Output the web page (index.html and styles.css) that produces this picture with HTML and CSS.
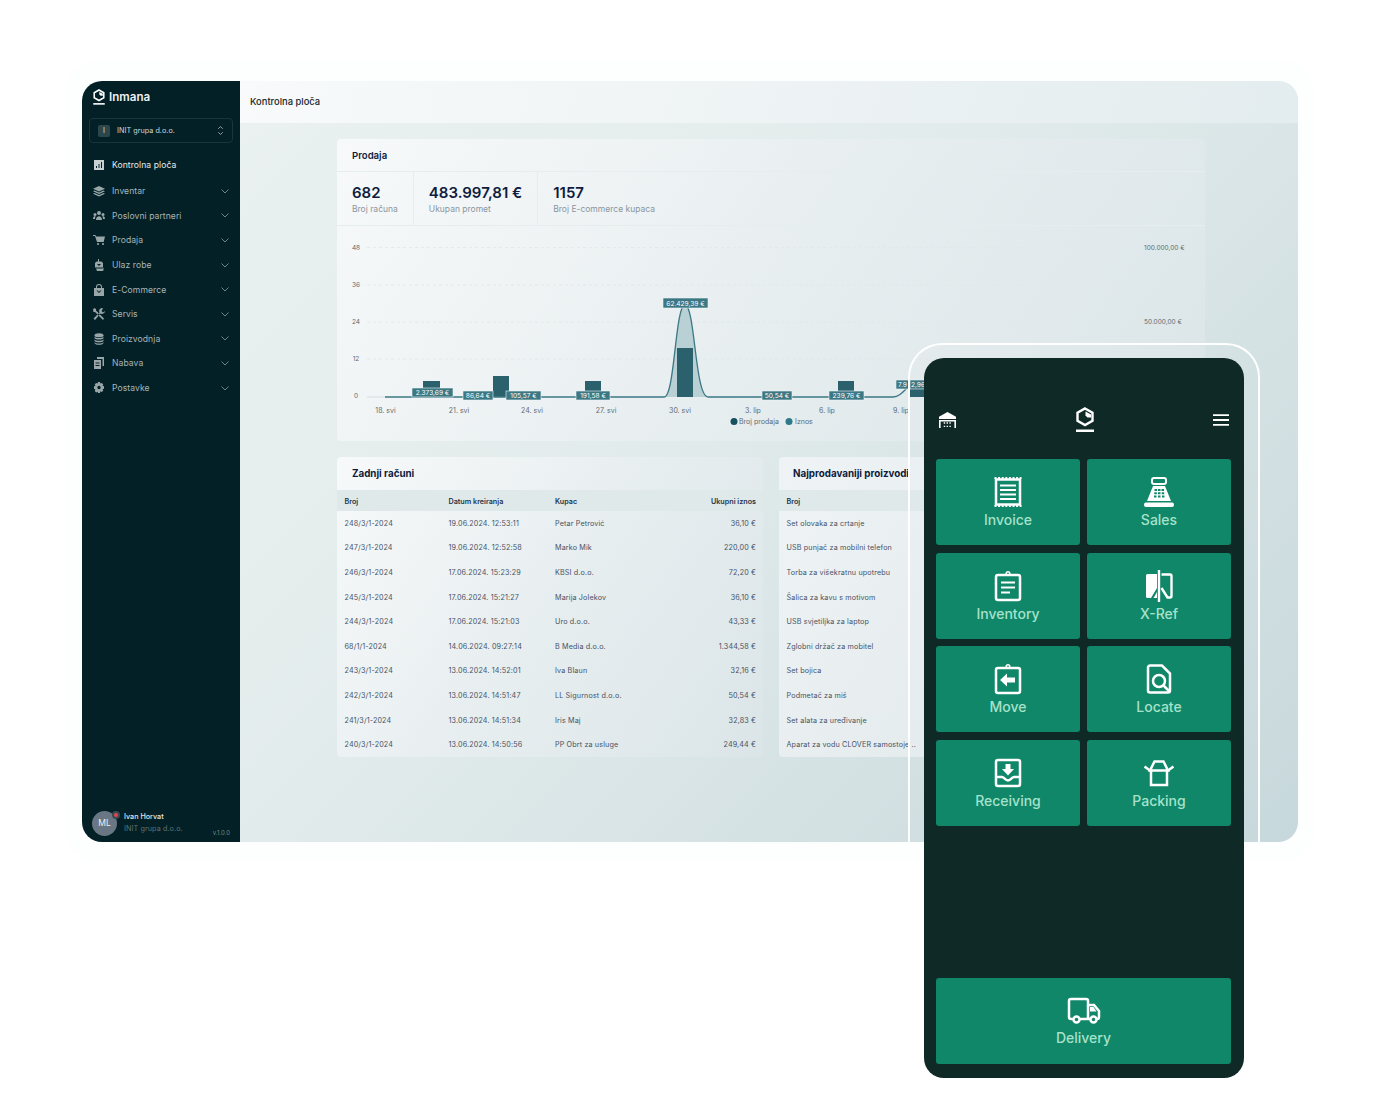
FILE: index.html
```html
<!DOCTYPE html>
<html lang="en">

<head>
    <title>Inmana</title>
    <meta name="viewport" content="width=device-width, initial-scale=1" />
    <link rel="stylesheet" href="styles.css">
</head>

<body>
    <div class="stage">
        <div class="halo"></div>

        <div class="window">
            <aside class="sidebar">
                <div class="brand">
                    <svg class="brand-logo" viewBox="0 0 18 25">
                        <path d="M9 1.500 16.500 5.800V13.700L9 18 1.500 13.700V5.800Z" fill="none" stroke="#fff" stroke-width="2.400" />
                        <path d="M9.500 4.500 15 7.500V10.500H11.500L9.500 8.500Z" fill="#fff" />
                        <rect x="0" y="22" width="18" height="2.500" fill="#fff" />
                    </svg>
                    <span>Inmana</span>
                </div>
                <div class="company">
                    <span class="company-chip">I</span>
                    <span class="company-name">INIT grupa d.o.o.</span>
                    <svg class="company-arrows" viewBox="0 0 8 12">
                        <path d="M1.5 4 4 1.5 6.5 4M1.5 8 4 10.5 6.5 8" fill="none" stroke="#a9b5b6" />
                    </svg>
                </div>
                <nav class="menu">
                    <a class="menu-item active">
                        <svg viewBox="0 0 12 12"><path d="M1 1h10v10H1zM3 9h1V7H3zM5.500 9h1V5h-1zM8 9h1V3H8z" fill-rule="evenodd" /></svg>
                        <span>Kontrolna ploča</span>
                    </a>
                    <a class="menu-item">
                        <svg viewBox="0 0 12 12"><path d="M6 1 12 3.700 6 6.400 0 3.700ZM1.500 5.500 6 7.500 10.500 5.500 12 6.200 6 8.900 0 6.200ZM1.500 8 6 10 10.500 8 12 8.700 6 11.400 0 8.700Z" /></svg>
                        <span>Inventar</span>
                        <svg class="chevron" viewBox="0 0 8 5"><path d="M.5.500 4 4 7.500.5" /></svg>
                    </a>
                    <a class="menu-item">
                        <svg viewBox="0 0 12 12"><circle cx="6" cy="3" r="2" /><circle cx="2" cy="4.500" r="1.500" /><circle cx="10" cy="4.500" r="1.500" /><path d="M3 10c0-5 6-5 6 0ZM0 9c0-3 2-3 2.500-3L2 9ZM12 9c0-3-2-3-2.500-3l.5 3Z" /></svg>
                        <span>Poslovni partneri</span>
                        <svg class="chevron" viewBox="0 0 8 5"><path d="M.5.500 4 4 7.500.5" /></svg>
                    </a>
                    <a class="menu-item">
                        <svg viewBox="0 0 12 12"><path d="M0 1h2.500L3 2.500h9l-1.300 5.500H4L2 2H0Z" /><circle cx="5" cy="10" r="1.100" /><circle cx="10" cy="10" r="1.100" /></svg>
                        <span>Prodaja</span>
                        <svg class="chevron" viewBox="0 0 8 5"><path d="M.5.500 4 4 7.500.5" /></svg>
                    </a>
                    <a class="menu-item">
                        <svg viewBox="0 0 12 12"><path d="M5 0h1v2.500h2.500L10 4v4.500H2V4l1.500-1.500H5ZM4 5l2 2 2-2H4ZM3 9.500h6.500l1-1V11a1 1 0 0 1-1 1H4Z" fill-rule="evenodd" /></svg>
                        <span>Ulaz robe</span>
                        <svg class="chevron" viewBox="0 0 8 5"><path d="M.5.500 4 4 7.500.5" /></svg>
                    </a>
                    <a class="menu-item">
                        <svg viewBox="0 0 12 12"><path d="M1 4h2V3a3 3 0 0 1 6 0v1h2v8H1ZM4 4h4V3a2 2 0 0 0-4 0ZM3.500 6.500 6 9l2.500-2.500H7.300L6 7.800 4.700 6.500Z" fill-rule="evenodd" /></svg>
                        <span>E-Commerce</span>
                        <svg class="chevron" viewBox="0 0 8 5"><path d="M.5.500 4 4 7.500.5" /></svg>
                    </a>
                    <a class="menu-item">
                        <svg viewBox="0 0 12 12"><path d="M1 0 3 1v1.500L11 10.500 10 12 2 4H.5L0 2ZM9 0a3 3 0 0 0-2.500 4.500L.5 10.500 2 12 7.500 5.500A3 3 0 0 0 12 3L10 4.500 8.500 3 10 .5Z" /></svg>
                        <span>Servis</span>
                        <svg class="chevron" viewBox="0 0 8 5"><path d="M.5.500 4 4 7.500.5" /></svg>
                    </a>
                    <a class="menu-item">
                        <svg viewBox="0 0 12 12"><ellipse cx="6" cy="2.200" rx="4.500" ry="2" /><path d="M1.500 3.500c1 2 8 2 9 0V5c-1 2-8 2-9 0ZM1.500 6.200c1 2 8 2 9 0v1.500c-1 2-8 2-9 0ZM1.500 8.900c1 2 8 2 9 0v1c-1 2.500-8 2.500-9 0Z" /></svg>
                        <span>Proizvodnja</span>
                        <svg class="chevron" viewBox="0 0 8 5"><path d="M.5.500 4 4 7.500.5" /></svg>
                    </a>
                    <a class="menu-item">
                        <svg viewBox="0 0 12 12"><path d="M4 0h7v9H9.500V2H4ZM1 3h7v9H1ZM2.500 5.500v1h4v-1ZM2.500 8v1h4V8Z" fill-rule="evenodd" /></svg>
                        <span>Nabava</span>
                        <svg class="chevron" viewBox="0 0 8 5"><path d="M.5.500 4 4 7.500.5" /></svg>
                    </a>
                    <a class="menu-item">
                        <svg viewBox="0 0 12 12"><path d="M5 0h2l.4 1.600 1.500-.6 1.400 1.400-.8 1.400L11 4.300v2.400l-1.500.5.800 1.400-1.400 1.400-1.500-.8L7 11H5l-.4-1.300-1.500.8-1.400-1.400.8-1.400L1 6.700V4.300l1.500-.5-.8-1.400L3.100 1l1.500.6ZM6 3.800a1.700 1.700 0 1 0 0 3.400 1.700 1.700 0 0 0 0-3.400Z" fill-rule="evenodd" /></svg>
                        <span>Postavke</span>
                        <svg class="chevron" viewBox="0 0 8 5"><path d="M.5.500 4 4 7.500.5" /></svg>
                    </a>
                </nav>
                <div class="user">
                    <div class="avatar">ML<span class="avatar-dot"></span></div>
                    <div class="user-info">
                        <div class="user-name">Ivan Horvat</div>
                        <div class="user-company">INIT grupa d.o.o.</div>
                    </div>
                    <div class="version">v.1.0.0</div>
                </div>
            </aside>

            <main class="main">
                <header class="topbar">Kontrolna ploča</header>
                <div class="content">
                    <section class="card sales">
                        <h2 class="card-title small">Prodaja</h2>
                        <div class="stats">
                            <div class="stat">
                                <div class="stat-value">682</div>
                                <div class="stat-label">Broj računa</div>
                            </div>
                            <div class="stat">
                                <div class="stat-value">483.997,81 €</div>
                                <div class="stat-label">Ukupan promet</div>
                            </div>
                            <div class="stat">
                                <div class="stat-value">1157</div>
                                <div class="stat-label">Broj E-commerce kupaca</div>
                            </div>
                        </div>
                        <!-- chart coords: x is page x - 337, y is page y - 226 -->
                        <svg class="chart" viewBox="0 0 868 215">
                            <g class="grid">
                                <path d="M30 21.500H800M30 59H800M30 96H800M30 133H800" />
                            </g>
                            <path class="axis" d="M30 171H48" />
                            <g class="tick-y">
                                <text x="19" y="24">48</text>
                                <text x="19" y="61">36</text>
                                <text x="19" y="98">24</text>
                                <text x="19" y="135">12</text>
                                <text x="19" y="172">0</text>
                            </g>
                            <g class="tick-r">
                                <text x="807" y="24">100.000,00 €</text>
                                <text x="807" y="98">50.000,00 €</text>
                            </g>
                            <g class="tick-x">
                                <text x="48.500" y="187">18. svi</text>
                                <text x="122" y="187">21. svi</text>
                                <text x="195" y="187">24. svi</text>
                                <text x="269" y="187">27. svi</text>
                                <text x="343" y="187">30. svi</text>
                                <text x="416" y="187">3. lip</text>
                                <text x="490" y="187">6. lip</text>
                                <text x="564" y="187">9. lip</text>
                            </g>
                            <path class="area" d="M327 171C338 171 338 79 348 79S358 171 371 171Z" />
                            <g class="bars">
                                <rect x="86" y="155" width="17" height="16" />
                                <rect x="156" y="150" width="16" height="21" />
                                <rect x="248" y="155" width="16" height="16" />
                                <rect x="340" y="122" width="16" height="49" />
                                <rect x="501" y="155" width="16" height="16" />
                                <rect x="572" y="162" width="16" height="9" />
                            </g>
                            <path class="line" d="M48 171H327C338 171 338 79 348 79S358 171 371 171H556C562 171 566 166 572 160" />
                            <g class="point-label">
                                <rect x="75" y="162" width="41" height="9" /><text x="95.500" y="169">2.373,69 €</text>
                                <rect x="126" y="165" width="30" height="9" /><text x="141" y="172">86,64 €</text>
                                <rect x="169" y="165" width="35" height="9" /><text x="186.500" y="172">105,57 €</text>
                                <rect x="239" y="165" width="34" height="9" /><text x="256" y="172">191,58 €</text>
                                <rect x="326" y="72" width="45" height="10" /><text x="348.500" y="80">62.429,39 €</text>
                                <rect x="425" y="165" width="30" height="9" /><text x="440" y="172">50,54 €</text>
                                <rect x="492" y="165" width="35" height="9" /><text x="509.500" y="172">239,76 €</text>
                                <rect x="559" y="154" width="13" height="9" /><text x="565.500" y="161">7.9</text>
                                <rect x="573" y="154" width="16" height="9" /><text x="581" y="161">2,96</text>
                            </g>
                            <circle class="legend-a" cx="397" cy="195.500" r="3.500" />
                            <text class="legend" x="402" y="198">Broj prodaja</text>
                            <circle class="legend-b" cx="452" cy="195.500" r="3.500" />
                            <text class="legend" x="458" y="198">Iznos</text>
                        </svg>
                    </section>

                    <div class="tables">
                        <section class="card">
                            <h2 class="card-title">Zadnji računi</h2>
                            <table class="table">
                                <thead>
                                    <tr><th class="col-num">Broj</th><th class="col-date">Datum kreiranja</th><th>Kupac</th><th class="right">Ukupni iznos</th></tr>
                                </thead>
                                <tbody>
                                    <tr><td>248/3/1-2024</td><td>19.06.2024. 12:53:11</td><td>Petar Petrović</td><td class="right">36,10 €</td></tr>
                                    <tr><td>247/3/1-2024</td><td>19.06.2024. 12:52:58</td><td>Marko Mik</td><td class="right">220,00 €</td></tr>
                                    <tr><td>246/3/1-2024</td><td>17.06.2024. 15:23:29</td><td>KBSI d.o.o.</td><td class="right">72,20 €</td></tr>
                                    <tr><td>245/3/1-2024</td><td>17.06.2024. 15:21:27</td><td>Marija Jolekov</td><td class="right">36,10 €</td></tr>
                                    <tr><td>244/3/1-2024</td><td>17.06.2024. 15:21:03</td><td>Uro d.o.o.</td><td class="right">43,33 €</td></tr>
                                    <tr><td>68/1/1-2024</td><td>14.06.2024. 09:27:14</td><td>B Media d.o.o.</td><td class="right">1.344,58 €</td></tr>
                                    <tr><td>243/3/1-2024</td><td>13.06.2024. 14:52:01</td><td>Iva Blaun</td><td class="right">32,16 €</td></tr>
                                    <tr><td>242/3/1-2024</td><td>13.06.2024. 14:51:47</td><td>LL Sigurnost d.o.o.</td><td class="right">50,54 €</td></tr>
                                    <tr><td>241/3/1-2024</td><td>13.06.2024. 14:51:34</td><td>Iris Maj</td><td class="right">32,83 €</td></tr>
                                    <tr><td>240/3/1-2024</td><td>13.06.2024. 14:50:56</td><td>PP Obrt za usluge</td><td class="right">249,44 €</td></tr>
                                </tbody>
                            </table>
                        </section>
                        <section class="card">
                            <h2 class="card-title">Najprodavaniji proizvodi</h2>
                            <table class="table">
                                <thead>
                                    <tr><th>Broj</th></tr>
                                </thead>
                                <tbody>
                                    <tr><td>Set olovaka za crtanje</td></tr>
                                    <tr><td>USB punjač za mobilni telefon</td></tr>
                                    <tr><td>Torba za višekratnu upotrebu</td></tr>
                                    <tr><td>Šalica za kavu s motivom</td></tr>
                                    <tr><td>USB svjetiljka za laptop</td></tr>
                                    <tr><td>Zglobni držač za mobitel</td></tr>
                                    <tr><td>Set bojica</td></tr>
                                    <tr><td>Podmetač za miš</td></tr>
                                    <tr><td>Set alata za uređivanje</td></tr>
                                    <tr><td>Aparat za vodu CLOVER samostoje ..</td></tr>
                                </tbody>
                            </table>
                        </section>
                    </div>
                </div>
            </main>
        </div>

        <div class="phone-frame"></div>

        <div class="phone">
            <div class="phone-header">
                <svg class="phone-warehouse" viewBox="0 0 20 18">
                    <path d="M1 6 10 1l9 5v2.500H1Z" fill="#fff" />
                    <path d="M1 9.500h18V18h-1.700v-7H2.700v7H1Z" fill="#fff" />
                    <path d="M6 12h1.500v1.500H6zM9 12h1.500v1.500H9zM12 12h1.500v1.500H12zM6 15.500h1.500V17H6zM9 15.500h1.500V17H9zM12 15.500h1.500V17H12z" fill="#fff" />
                </svg>
                <svg class="phone-logo" viewBox="0 0 18 25">
                    <path d="M9 1.500 16.500 5.800V13.700L9 18 1.500 13.700V5.800Z" fill="none" stroke="#fff" stroke-width="2.400" />
                    <path d="M9.500 4.500 15 7.500V10.500H11.500L9.500 8.500Z" fill="#fff" />
                    <rect x="0" y="22.500" width="18" height="2.500" fill="#fff" />
                </svg>
                <svg class="phone-burger" viewBox="0 0 16 12">
                    <path d="M0 1.200H16M0 6H16M0 10.800H16" stroke="#fff" stroke-width="1.800" />
                </svg>
            </div>

            <div class="tiles">
                <a class="tile">
                    <svg viewBox="0 0 30 32">
                        <rect x="3" y="3.500" width="24" height="25" />
                        <path d="M1.500 2H28.500M1.500 30H28.500" stroke-dasharray="2 1.600" stroke-width="2" />
                        <path d="M7 9.500H23M7 14H23M7 18.500H23M7 23H23" stroke-width="2" />
                    </svg>
                    <span>Invoice</span>
                </a>
                <a class="tile">
                    <svg viewBox="0 0 30 32">
                        <rect x="8" y="2" width="14" height="6" rx="2" stroke-width="2" />
                        <path class="solid" d="M9 10H21L27 25H3Z" />
                        <path class="keys" d="M10.500 13h2.500v2h-2.500zM14 13h2.500v2H14zM17.500 13h2.500v2h-2.500zM10.300 16.200h2.500v2h-2.500zM14 16.200h2.500v2H14zM17.700 16.200h2.500v2h-2.500zM10 19.400h2.500v2H10zM14 19.400h2.500v2H14zM18 19.400h2.500v2H18z" />
                        <rect class="solid" x="0" y="26.500" width="30" height="4.500" rx="2" />
                    </svg>
                    <span>Sales</span>
                </a>
                <a class="tile">
                    <svg viewBox="0 0 30 32">
                        <rect x="3" y="5" width="24" height="25" rx="2" />
                        <circle cx="15" cy="3.500" r="1.800" stroke-width="1.500" />
                        <path d="M8 12.500H22M8 17.500H22M8 22.500H17" stroke-width="2" />
                    </svg>
                    <span>Inventory</span>
                </a>
                <a class="tile">
                    <svg viewBox="0 0 30 32">
                        <path d="M15 0V32" stroke-width="2.400" />
                        <path class="solid" d="M13 4H3.500A1.500 1.500 0 0 0 2 5.500V26.500A1.500 1.500 0 0 0 3.500 28H7L13 18Z" />
                        <path class="solid" d="M13 22V28H9.500Z" />
                        <path d="M17.500 4.500H26A1.500 1.500 0 0 1 27.500 6V26A1.500 1.500 0 0 1 26 27.500H23.500L17.500 18" stroke-width="2.400" />
                    </svg>
                    <span>X-Ref</span>
                </a>
                <a class="tile">
                    <svg viewBox="0 0 30 32">
                        <rect x="3" y="5" width="24" height="25" rx="2" />
                        <circle cx="15" cy="3.500" r="1.800" stroke-width="1.500" />
                        <path class="solid" d="M7 17 14 10.500V14.500H22V19.500H14V23.500Z" />
                    </svg>
                    <span>Move</span>
                </a>
                <a class="tile">
                    <svg viewBox="0 0 30 32">
                        <path d="M18 2.500H6A2 2 0 0 0 4 4.500V27.500A2 2 0 0 0 6 29.500H24A2 2 0 0 0 26 27.500V10.500Z" />
                        <circle cx="15" cy="18" r="6" />
                        <path d="M19.500 22.500 26 29" />
                    </svg>
                    <span>Locate</span>
                </a>
                <a class="tile">
                    <svg viewBox="0 0 30 32">
                        <rect x="3" y="3" width="24" height="26" rx="2" />
                        <path d="M3 20H9C11 20 12 23.500 15 23.500S19 20 21 20H27" />
                        <path class="solid" d="M12.500 7H17.500V12H21L15 18.500 9 12H12.500Z" />
                    </svg>
                    <span>Receiving</span>
                </a>
                <a class="tile">
                    <svg viewBox="0 0 30 32">
                        <path d="M10.500 4.500H19.500L24 13.500H6Z" />
                        <path d="M7 13.500V28H23V13.500" />
                        <path d="M.5 9.500 6 13.500M29.500 9.500 24 13.500" />
                    </svg>
                    <span>Packing</span>
                </a>
            </div>

            <a class="tile delivery">
                <svg viewBox="0 0 34 28">
                    <path d="M7 23H4A2 2 0 0 1 2 21V5A2 2 0 0 1 4 3H19A2 2 0 0 1 21 5V23H12M21 9H27L32 15V21A2 2 0 0 1 30 23H29M21 23H24" />
                    <path class="solid" d="M23 11H26.500L29.500 15.500H23Z" />
                    <circle cx="9.500" cy="23.500" r="3" />
                    <circle cx="26.500" cy="23.500" r="3" />
                </svg>
                <span>Delivery</span>
            </a>
        </div>
    </div>
</body>

</html>
```

FILE: styles.css
```css
* {
    box-sizing: border-box;
}

html,
body {
    margin: 0;
    height: 100%;
    overflow: hidden;
    background: #fff;
}

body {
    font-family: Inter, "Liberation Sans", sans-serif;
    color: #0e1c3d;
}

.stage {
    position: relative;
    width: 1374px;
    height: 1095px;
    overflow: hidden;
}

.halo {
    position: absolute;
    left: 66px;
    top: 61px;
    width: 1248px;
    height: 800px;
    border-radius: 30px;
    background: #fdfefe;
}

/* desktop window */
.window {
    position: absolute;
    left: 82px;
    top: 81px;
    width: 1216px;
    height: 761px;
    display: flex;
    border-radius: 20px;
    overflow: hidden;
}

.sidebar {
    width: 158px;
    flex: none;
    display: flex;
    flex-direction: column;
    padding: 7px 7px 0;
    background: #022026;
    color: #a9b5b6;
}

.brand {
    display: flex;
    align-items: center;
    gap: 4px;
    height: 17px;
    padding-left: 4px;
    margin-bottom: 13px;
    color: #eef3f3;
    font-size: 11.6px;
    font-weight: 600;
}

.brand-logo {
    width: 12px;
    height: 16px;
}

.company {
    display: flex;
    align-items: center;
    height: 25px;
    padding: 0 8px;
    border: 1px solid #17373b;
    border-radius: 4px;
    font-size: 7.2px;
    letter-spacing: 0.05px;
    color: #d3dadb;
}

.company-chip {
    width: 12px;
    height: 12px;
    margin-right: 7px;
    border-radius: 2px;
    background: #2b474c;
    text-align: center;
    line-height: 12px;
}

.company-name {
    flex: 1;
}

.company-arrows {
    width: 7px;
    height: 11px;
}

.menu {
    margin-top: 9px;
}

.menu-item {
    display: flex;
    align-items: center;
    height: 24.6px;
    padding: 0 4px;
    font-size: 8.6px;
    letter-spacing: 0.06px;
}

.menu-item svg {
    width: 12px;
    height: 12px;
    flex: none;
    margin-right: 7px;
    fill: #98a6a8;
}

.menu-item span {
    flex: 1;
}

.menu-item .chevron {
    width: 8px;
    height: 5px;
    margin-right: 0;
    fill: none;
    stroke: #7f8f91;
    stroke-width: 0.9;
}

.menu-item.active {
    color: #e6ecec;
    height: 26px;
    margin-bottom: 1px;
}

.menu-item.active svg {
    fill: #c6d0d1;
}

.user {
    position: relative;
    display: flex;
    align-items: center;
    margin-top: auto;
    margin-left: 3px;
    margin-bottom: 6px;
    gap: 7px;
}

.avatar {
    position: relative;
    width: 25px;
    height: 25px;
    flex: none;
    border-radius: 50%;
    background: #697683;
    color: #eef0f2;
    font-size: 8.5px;
    line-height: 25px;
    text-align: center;
}

.avatar-dot {
    position: absolute;
    right: -3px;
    top: 0;
    width: 8px;
    height: 8px;
    border: 2px solid #3a4a55;
    border-radius: 50%;
    background: #e5454a;
}

.user-info {
    margin-top: -2px;
}

.user-name {
    font-size: 7.2px;
    font-weight: 500;
    color: #e2e7e8;
}

.user-company {
    margin-top: 3px;
    font-size: 7.2px;
    letter-spacing: 0.1px;
    color: #5f7376;
}

.version {
    position: absolute;
    right: 3px;
    bottom: 0;
    font-size: 6px;
    color: #7f8f91;
}

.main {
    flex: 1;
    display: flex;
    flex-direction: column;
    background: linear-gradient(135deg, #eaf1f0 0%, #e3ecec 40%, #c7d8dc 100%);
}

.topbar {
    height: 42px;
    flex: none;
    padding-left: 10px;
    line-height: 41px;
    font-size: 9.4px;
    font-weight: 500;
    color: #17272b;
    background: linear-gradient(100deg, #f8fafb 0%, #e3ecee 100%);
}

.content {
    padding: 16px 93px 0 97px;
}

.card {
    border-radius: 4px;
    overflow: hidden;
    background: linear-gradient(125deg, #f7f9fa 0%, #e6edef 55%, #dbe5e8 100%);
}

.card + .card {
    background: linear-gradient(125deg, #eff3f5 0%, #e5ecee 55%, #dbe5e8 100%);
}

.sales {
    height: 302px;
}

.card-title {
    height: 33px;
    margin: 0;
    padding-left: 15px;
    line-height: 34px;
    font-size: 9.8px;
    font-weight: 700;
}

.card + .card .card-title {
    padding-left: 14px;
}

.card-title.small {
    font-size: 9.6px;
    font-weight: 600;
    line-height: 33px;
    border-bottom: 1px solid #e6edee;
}

.stats {
    display: flex;
    height: 54px;
    border-bottom: 1px solid #e6edee;
}

.stat {
    padding: 12px 15px 0;
    border-right: 1px solid #e6edee;
}

.stat:last-child {
    border-right: 0;
}

.stat-value {
    font-size: 15px;
    font-weight: 600;
    line-height: 18px;
}

.stat-label {
    margin-top: 2px;
    font-size: 8.5px;
    line-height: 10px;
    color: #8a96a0;
}

.chart {
    display: block;
    width: 868px;
    height: 215px;
    font-size: 6.5px;
}

.chart text {
    fill: #5e6b72;
}

.grid path {
    fill: none;
    stroke: #dfe7e8;
    stroke-width: 0.8;
    stroke-dasharray: 3 3;
}

.axis {
    stroke: #d5dee0;
}

.tick-x text {
    text-anchor: middle;
    font-size: 7px;
}

.tick-y text {
    text-anchor: middle;
}

.area {
    fill: #b9d0d5;
}

.bars rect {
    fill: #2b606d;
}

.line {
    fill: none;
    stroke: #3b7884;
    stroke-width: 1.3;
}

.point-label rect {
    fill: #3b7884;
    stroke: #eef3f4;
    stroke-width: 0.6;
}

.chart .point-label text {
    fill: #fff;
    text-anchor: middle;
    font-size: 6.6px;
}

.legend-a {
    fill: #14505f;
}

.legend-b {
    fill: #2f7a88;
}

.chart .legend {
    font-size: 7px;
}

.tables {
    display: grid;
    grid-template-columns: 426px 426px;
    gap: 16px;
    margin-top: 16px;
}

.table {
    width: 100%;
    border-collapse: collapse;
    font-size: 7.2px;
    letter-spacing: 0.14px;
    color: #465265;
}

.table th {
    height: 21px;
    padding: 1px 7px 0 7.5px;
    text-align: left;
    font-weight: 600;
    letter-spacing: 0;
    color: #26344a;
    background: #dfe9ea;
}

.table td {
    height: 24.6px;
    padding: 0 7px 0 7.5px;
    white-space: nowrap;
}

.table .right {
    text-align: right;
}

.col-num {
    width: 104px;
}

.col-date {
    width: 106.500px;
}

/* phone */
.phone-frame {
    position: absolute;
    left: 908px;
    top: 343px;
    width: 352px;
    height: 499px;
    border: 2px solid #fff;
    border-bottom: 0;
    border-radius: 34px 34px 0 0;
}

.phone {
    position: absolute;
    left: 924px;
    top: 358px;
    width: 320px;
    height: 720px;
    display: flex;
    flex-direction: column;
    padding: 0 13px 14px 12px;
    border-radius: 20px;
    background: #0f2926;
}

.phone-header {
    display: flex;
    align-items: center;
    justify-content: space-between;
    height: 101px;
    padding: 22px 2px 0 2px;
}

.phone-warehouse {
    width: 19px;
    height: 17px;
}

.phone-logo {
    width: 18px;
    height: 25px;
}

.phone-burger {
    width: 16px;
    height: 12px;
}

.tiles {
    display: grid;
    grid-template-columns: 144px 144px;
    grid-auto-rows: 86px;
    gap: 7.6px 7px;
}

.tile {
    display: flex;
    flex-direction: column;
    align-items: center;
    justify-content: center;
    gap: 3px;
    border-radius: 3px;
    background: #0f8768;
    color: #a6e2cb;
    font-size: 14px;
    font-weight: 500;
    line-height: 17px;
}

.tile svg {
    width: 30px;
    height: 32px;
    fill: none;
    stroke: #fff;
    stroke-width: 2.5;
}

.tile .solid {
    fill: #fff;
    stroke: none;
}

.tile .keys {
    fill: #0f8768;
    stroke: none;
}

.delivery {
    margin-top: auto;
    height: 86px;
    gap: 5px;
}

.delivery svg {
    width: 34px;
    height: 28px;
}
```
